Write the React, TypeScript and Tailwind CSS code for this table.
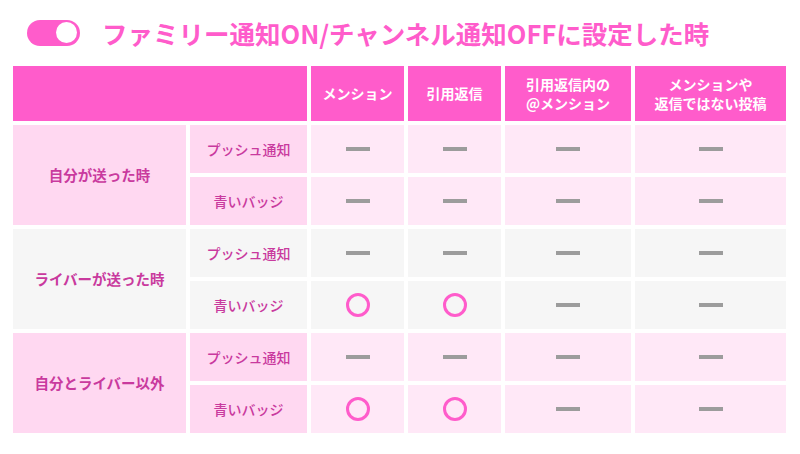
import React from "react";

type Mark = "dash" | "circle";

const groups: {
  label: string;
  tone: "pink" | "gray";
  rows: { name: string; marks: Mark[] }[];
}[] = [
  {
    label: "自分が送った時",
    tone: "pink",
    rows: [
      { name: "プッシュ通知", marks: ["dash", "dash", "dash", "dash"] },
      { name: "青いバッジ", marks: ["dash", "dash", "dash", "dash"] },
    ],
  },
  {
    label: "ライバーが送った時",
    tone: "gray",
    rows: [
      { name: "プッシュ通知", marks: ["dash", "dash", "dash", "dash"] },
      { name: "青いバッジ", marks: ["circle", "circle", "dash", "dash"] },
    ],
  },
  {
    label: "自分とライバー以外",
    tone: "pink",
    rows: [
      { name: "プッシュ通知", marks: ["dash", "dash", "dash", "dash"] },
      { name: "青いバッジ", marks: ["circle", "circle", "dash", "dash"] },
    ],
  },
];

const headers = [
  ["メンション"],
  ["引用返信"],
  ["引用返信内の", "@メンション"],
  ["メンションや", "返信ではない投稿"],
];

function MarkIcon({ mark }: { mark: Mark }) {
  if (mark === "circle") {
    return (
      <div className="w-[24px] h-[24px] rounded-full border-[3.5px] border-[#ff5ccb]" />
    );
  }
  return <div className="w-[24px] h-[4px] bg-[#9c9c9c]" />;
}

export default function App() {
  return (
    <div
      className="w-[800px] h-[454px] bg-white overflow-hidden"
      style={{ fontFamily: '"Noto Sans CJK JP", "Noto Sans", sans-serif' }}
    >
      {/* title */}
      <div className="flex items-center h-[66px] pl-[27px] pb-[1px]">
        <div className="w-[53px] h-[26px] rounded-full bg-[#ff5ccb] flex items-center justify-end pr-[3px]">
          <div className="w-[21px] h-[21px] rounded-full bg-white" />
        </div>
        <h1 className="ml-[22px] text-[25.5px] leading-none font-bold text-[#ff5ccb]">
          ファミリー通知ON/チャンネル通知OFFに設定した時
        </h1>
      </div>

      {/* table */}
      <div className="ml-[13px] grid grid-cols-[173px_117px_93px_93px_126px_151px] grid-rows-[55px_repeat(6,48px)] gap-[4px]">
        <div className="col-span-2 bg-[#ff5ccb]" />
        {headers.map((h, i) => (
          <div
            key={i}
            className="bg-[#ff5ccb] flex flex-col items-center justify-center text-white text-[14px] font-bold leading-[19px]"
          >
            {h.map((line) => (
              <span key={line}>{line}</span>
            ))}
          </div>
        ))}

        {groups.map((g) => {
          const main = g.tone === "pink" ? "bg-[#ffd8f1]" : "bg-[#f6f6f6]";
          const data = g.tone === "pink" ? "bg-[#ffe8f7]" : "bg-[#f6f6f6]";
          return (
            <React.Fragment key={g.label}>
              <div
                className={`row-span-2 ${main} flex items-center justify-center text-[14.5px] font-bold text-[#c93a9e]`}
              >
                {g.label}
              </div>
              {g.rows.map((r, ri) => (
                <React.Fragment key={ri}>
                  <div
                    className={`${main} flex items-center justify-center text-[14px] font-medium text-[#c93a9e] ${
                      ri === 1 ? "col-start-2" : ""
                    }`}
                  >
                    {r.name}
                  </div>
                  {r.marks.map((m, mi) => (
                    <div
                      key={mi}
                      className={`${data} flex items-center justify-center`}
                    >
                      <MarkIcon mark={m} />
                    </div>
                  ))}
                </React.Fragment>
              ))}
            </React.Fragment>
          );
        })}
      </div>
    </div>
  );
}
